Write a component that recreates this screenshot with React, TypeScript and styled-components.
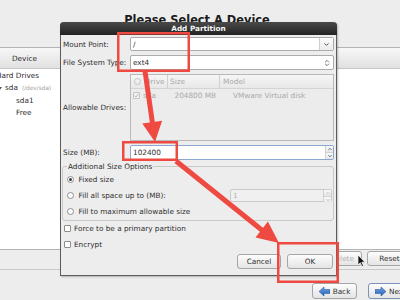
import styled, { createGlobalStyle } from "styled-components";
import { ChevronDown, ChevronsUpDown, ChevronUp } from "lucide-react";

const GlobalStyle = createGlobalStyle`
  html, body { margin: 0; padding: 0; }
  body {
    width: 400px;
    height: 300px;
    overflow: hidden;
    background: #ededed;
    font-family: "DejaVu Sans", "Liberation Sans", sans-serif;
    font-size: 7.3px;
    color: #2f2f2f;
  }
`;

const Screen = styled.div`
  position: relative;
  width: 400px;
  height: 300px;
  overflow: hidden;
  background: #ededed;
  display: flex;
  flex-direction: column;
`;

const PageTitle = styled.div`
  height: 47px;
  box-sizing: border-box;
  padding: 14px 6px 0 0;
  text-align: center;
  font-size: 11.4px;
  font-weight: bold;
  line-height: 13px;
  color: #1c1c1c;
`;

const DeviceTable = styled.div`
  height: 201px;
  display: flex;
  flex-direction: column;
  border-top: 1px solid #b3b3b3;
  border-bottom: 1px solid #b3b3b3;
`;

const TableHead = styled.div`
  height: 20px;
  display: flex;
  align-items: center;
  padding-left: 12px;
  background: linear-gradient(#f7f7f7, #e1e1e1);
  border-bottom: 1px solid #c6c6c6;
`;

const TableBody = styled.div`
  flex: 1;
  background: #fff;
  padding-top: 1px;
`;

const DeviceRow = styled.div<{ $indent: number }>`
  height: 12.3px;
  line-height: 12.3px;
  display: flex;
  align-items: center;
  margin-left: ${(p) => p.$indent}px;
  white-space: nowrap;
`;

const Expander = styled.span`
  width: 0;
  height: 0;
  margin: 1px 3px 0 0;
  border-left: 3.5px solid transparent;
  border-right: 3.5px solid transparent;
  border-top: 4px solid #505050;
`;

const DevPath = styled.span`
  font-size: 5.8px;
  color: #a0a0a0;
  margin-left: 4px;
`;

const ButtonRow = styled.div`
  height: 20px;
  box-sizing: border-box;
  display: flex;
  align-items: flex-start;
  gap: 5px;
  padding: 1px 0 0 322px;
  border-bottom: 1px solid #c9c9c9;
`;

const NavRow = styled.div`
  flex: 1;
  display: flex;
  align-items: flex-start;
  gap: 11px;
  padding: 13px 0 0 312px;
`;

const PushButton = styled.button<{ $width: number; $height?: number; $muted?: boolean; $focus?: boolean }>`
  flex: none;
  width: ${(p) => p.$width}px;
  height: ${(p) => p.$height ?? 15}px;
  box-sizing: border-box;
  padding: 0;
  display: inline-flex;
  align-items: center;
  justify-content: center;
  gap: 3px;
  font: inherit;
  color: ${(p) => (p.$muted ? "#b4b4b4" : "#2f2f2f")};
  background: linear-gradient(#fdfdfd, #e4e4e4);
  border: 1px solid ${(p) => (p.$focus ? "#7d92b8" : "#a6a6a6")};
  border-radius: 3px;
`;

const Dialog = styled.div`
  position: absolute;
  left: 60px;
  top: 22px;
  width: 277px;
  height: 254px;
  box-sizing: border-box;
  display: flex;
  flex-direction: column;
  background: #ededed;
  border: 1px solid #5c5c5c;
  border-top: none;
  border-radius: 4px 4px 0 0;
  box-shadow: 1px 1px 2px rgba(0, 0, 0, 0.25);
`;

const TitleBar = styled.div`
  height: 13px;
  margin: 0 -1px;
  line-height: 13px;
  text-align: center;
  font-weight: bold;
  color: #f4f4f4;
  background: linear-gradient(#4a4a4a, #232323);
  border-radius: 4px 4px 0 0;
`;

const DialogBody = styled.div`
  flex: 1;
  display: flex;
  flex-direction: column;
  padding: 2px 2px 0 2px;
`;

const FieldGrid = styled.div`
  display: grid;
  grid-template-columns: 67px 1fr;
  grid-template-rows: 14px 15px 67px 15px;
  row-gap: 4px;
  align-items: center;
`;

const FieldLabel = styled.div`
  white-space: nowrap;
`;

const Entry = styled.div<{ $focus?: boolean; $muted?: boolean }>`
  height: 100%;
  box-sizing: border-box;
  display: flex;
  align-items: stretch;
  background: ${(p) => (p.$muted ? "#f0f0f0" : "#fff")};
  border: 1px solid ${(p) => (p.$focus ? "#8aa7d2" : p.$muted ? "#cacaca" : "#ababab")};
  border-radius: 2px;
  color: ${(p) => (p.$muted ? "#b2b2b2" : "#2f2f2f")};
`;

const EntryText = styled.div`
  flex: 1;
  display: flex;
  align-items: center;
  padding-left: 2px;
`;

const ComboButton = styled.div`
  width: 13px;
  display: flex;
  align-items: center;
  justify-content: center;
  border-left: 1px solid #cdcdcd;
  background: linear-gradient(#fbfbfb, #ececec);
  color: #444;
`;

const ComboIcon = styled.div`
  width: 12px;
  display: flex;
  align-items: center;
  justify-content: center;
  color: #555;
`;

const Spinner = styled.div<{ $muted?: boolean }>`
  width: 7px;
  display: flex;
  flex-direction: column;
  border-left: 1px solid #cfcfcf;
  color: ${(p) => (p.$muted ? "#bbb" : "#555")};
`;

const SpinHalf = styled.div`
  flex: 1;
  display: flex;
  align-items: center;
  justify-content: center;
  background: linear-gradient(#fafafa, #e6e6e6);
  & + & { border-top: 1px solid #d2d2d2; }
`;

const TreeBox = styled.div`
  height: 100%;
  box-sizing: border-box;
  display: flex;
  flex-direction: column;
  background: #ececec;
  border: 1px solid #b9b9b9;
  color: #a9a9a9;
`;

const TreeCols = styled.div`
  display: grid;
  grid-template-columns: 12px 24px 52px 1fr;
  align-items: center;
  white-space: nowrap;
`;

const TreeHeader = styled(TreeCols)`
  height: 14px;
  box-sizing: border-box;
  background: linear-gradient(#f6f6f6, #e8e8e8);
  border-bottom: 1px solid #d4d4d4;
`;

const TreeLine = styled(TreeCols)`
  height: 13px;
`;

const Cell = styled.div<{ $pad?: number; $sep?: boolean; $right?: boolean }>`
  height: 100%;
  display: flex;
  align-items: center;
  justify-content: ${(p) => (p.$right ? "flex-end" : "flex-start")};
  padding: 0 ${(p) => (p.$right ? 3 : 0)}px 0 ${(p) => p.$pad ?? 0}px;
  border-left: ${(p) => (p.$sep ? "1px solid #d0d0d0" : "none")};
  overflow: hidden;
`;

const RingMark = styled.span`
  width: 5px;
  height: 5px;
  border: 1px solid #c2c2c2;
  border-radius: 50%;
`;

const CheckBox = styled.span<{ $muted?: boolean }>`
  flex: none;
  width: 7px;
  height: 7px;
  box-sizing: border-box;
  display: inline-flex;
  align-items: center;
  justify-content: center;
  border: 1px solid ${(p) => (p.$muted ? "#c4c4c4" : "#8e8e8e")};
  border-radius: 1px;
  background: ${(p) => (p.$muted ? "#f2f2f2" : "#fff")};
`;

const Frame = styled.fieldset`
  margin: 2px 0 0 -1px;
  padding: 0 0 1px 3px;
  border: 1px solid #c9c9c9;
  border-radius: 3px;
  min-width: 0;
`;

const FrameTitle = styled.legend`
  padding: 0 1px;
  margin-left: 1px;
  line-height: 9px;
`;

const RadioRow = styled.div`
  height: 16px;
  display: flex;
  align-items: center;
  white-space: nowrap;
`;

const RadioDot = styled.span<{ $on?: boolean }>`
  flex: none;
  width: 7px;
  height: 7px;
  box-sizing: border-box;
  margin: 0 5px 0 0.5px;
  display: inline-flex;
  align-items: center;
  justify-content: center;
  border: 1px solid #8e8e8e;
  border-radius: 50%;
  background: #fff;
  &::after {
    content: "";
    display: ${(p) => (p.$on ? "block" : "none")};
    width: 3px;
    height: 3px;
    border-radius: 50%;
    background: #3c3c3c;
  }
`;

const SmallSpin = styled.div`
  width: 102px;
  height: 13px;
  margin: 0 1px 0 auto;
`;

const CheckRow = styled.div`
  height: 15.5px;
  display: flex;
  align-items: center;
  gap: 3px;
  padding-left: 1px;
  white-space: nowrap;
`;

const DialogActions = styled.div`
  margin-top: auto;
  display: flex;
  justify-content: flex-end;
  gap: 6px;
  padding: 0 1px 6px 0;
`;

const Overlay = styled.svg`
  position: absolute;
  left: 0;
  top: 0;
  pointer-events: none;
`;

const red = "#ee4a42";

const Tick = () => (
  <svg width="5" height="5" viewBox="0 0 5 5">
    <polyline points="0.6,2.6 2,4 4.5,0.8" fill="none" stroke="#b6b6b6" strokeWidth="1" />
  </svg>
);

const NavArrow = ({ flip }: { flip?: boolean }) => (
  <svg width="11" height="9" viewBox="0 0 11 9" style={flip ? { transform: "scaleX(-1)" } : undefined}>
    <defs>
      <linearGradient id="navblue" x1="0" y1="0" x2="0" y2="1">
        <stop offset="0" stopColor="#6aa6e8" />
        <stop offset="1" stopColor="#2a62b4" />
      </linearGradient>
    </defs>
    <polygon points="0,4.5 5,0 5,2.6 11,2.6 11,6.4 5,6.4 5,9" fill="url(#navblue)" stroke="#2a5a9e" strokeWidth="0.6" />
  </svg>
);

const Spin = ({ muted }: { muted?: boolean }) => (
  <Spinner $muted={muted}>
    <SpinHalf>
      <ChevronUp size={6} strokeWidth={3} />
    </SpinHalf>
    <SpinHalf>
      <ChevronDown size={6} strokeWidth={3} />
    </SpinHalf>
  </Spinner>
);

export default function App() {
  return (
    <>
      <GlobalStyle />
      <Screen>
        <PageTitle>Please Select A Device</PageTitle>
        <DeviceTable>
          <TableHead>Device</TableHead>
          <TableBody>
            <DeviceRow $indent={-4}>Hard Drives</DeviceRow>
            <DeviceRow $indent={-4}>
              <Expander />
              sda<DevPath>(/dev/sda)</DevPath>
            </DeviceRow>
            <DeviceRow $indent={16}>sda1</DeviceRow>
            <DeviceRow $indent={16}>Free</DeviceRow>
          </TableBody>
        </DeviceTable>
        <ButtonRow>
          <PushButton $width={40} $muted>
            Delete
          </PushButton>
          <PushButton $width={45}>Reset</PushButton>
        </ButtonRow>
        <NavRow>
          <PushButton $width={45} $height={16}>
            <NavArrow />
            Back
          </PushButton>
          <PushButton $width={45} $height={16} $focus>
            <NavArrow flip />
            Next
          </PushButton>
        </NavRow>

        <Dialog>
          <TitleBar>Add Partition</TitleBar>
          <DialogBody>
            <FieldGrid>
              <FieldLabel>Mount Point:</FieldLabel>
              <Entry>
                <EntryText>/</EntryText>
                <ComboButton>
                  <ChevronDown size={7} strokeWidth={3} />
                </ComboButton>
              </Entry>

              <FieldLabel>File System Type:</FieldLabel>
              <Entry>
                <EntryText>ext4</EntryText>
                <ComboIcon>
                  <ChevronsUpDown size={8} strokeWidth={2.5} />
                </ComboIcon>
              </Entry>

              <FieldLabel>Allowable Drives:</FieldLabel>
              <TreeBox>
                <TreeHeader>
                  <Cell $pad={3}>
                    <RingMark />
                  </Cell>
                  <Cell $pad={2}>Drive</Cell>
                  <Cell $pad={2} $sep>
                    Size
                  </Cell>
                  <Cell $pad={3} $sep>
                    Model
                  </Cell>
                </TreeHeader>
                <TreeLine>
                  <Cell $pad={2}>
                    <CheckBox $muted>
                      <Tick />
                    </CheckBox>
                  </Cell>
                  <Cell $pad={0}>sda</Cell>
                  <Cell $right>204800 MB</Cell>
                  <Cell $pad={14}>VMware Virtual disk</Cell>
                </TreeLine>
              </TreeBox>

              <FieldLabel>Size (MB):</FieldLabel>
              <Entry $focus>
                <EntryText>102400</EntryText>
                <Spin />
              </Entry>
            </FieldGrid>

            <Frame>
              <FrameTitle>Additional Size Options</FrameTitle>
              <RadioRow>
                <RadioDot $on />
                Fixed size
              </RadioRow>
              <RadioRow>
                <RadioDot />
                Fill all space up to (MB):
                <SmallSpin>
                  <Entry $muted>
                    <EntryText>1</EntryText>
                    <Spin muted />
                  </Entry>
                </SmallSpin>
              </RadioRow>
              <RadioRow>
                <RadioDot />
                Fill to maximum allowable size
              </RadioRow>
            </Frame>

            <CheckRow>
              <CheckBox />
              Force to be a primary partition
            </CheckRow>
            <CheckRow>
              <CheckBox />
              Encrypt
            </CheckRow>

            <DialogActions>
              <PushButton $width={44}>Cancel</PushButton>
              <PushButton $width={46}>OK</PushButton>
            </DialogActions>
          </DialogBody>
        </Dialog>

        <Overlay width="400" height="300" viewBox="0 0 400 300">
          <g fill="none" stroke={red} strokeWidth="2.5">
            <rect x="118.25" y="33.25" width="70.5" height="37.5" />
            <rect x="123.25" y="142.25" width="53.5" height="17.5" />
            <rect x="278.25" y="243.25" width="59.5" height="38.5" />
          </g>
          <g fill={red}>
            <line x1="145" y1="71" x2="152.6" y2="124" stroke={red} strokeWidth="5" />
            <polygon points="155,142 142.3,123.6 162.1,120.8" />
            <line x1="176" y1="161" x2="263" y2="231" stroke={red} strokeWidth="5" />
            <polygon points="279,243 255.5,237.4 267.9,221.6" />
          </g>
          <polygon
            points="358,255 358,265 360.3,262.8 362,266.5 363.5,265.8 361.8,262.2 365,262.2"
            fill="#111"
            stroke="#fff"
            strokeWidth="0.7"
          />
        </Overlay>
      </Screen>
    </>
  );
}
